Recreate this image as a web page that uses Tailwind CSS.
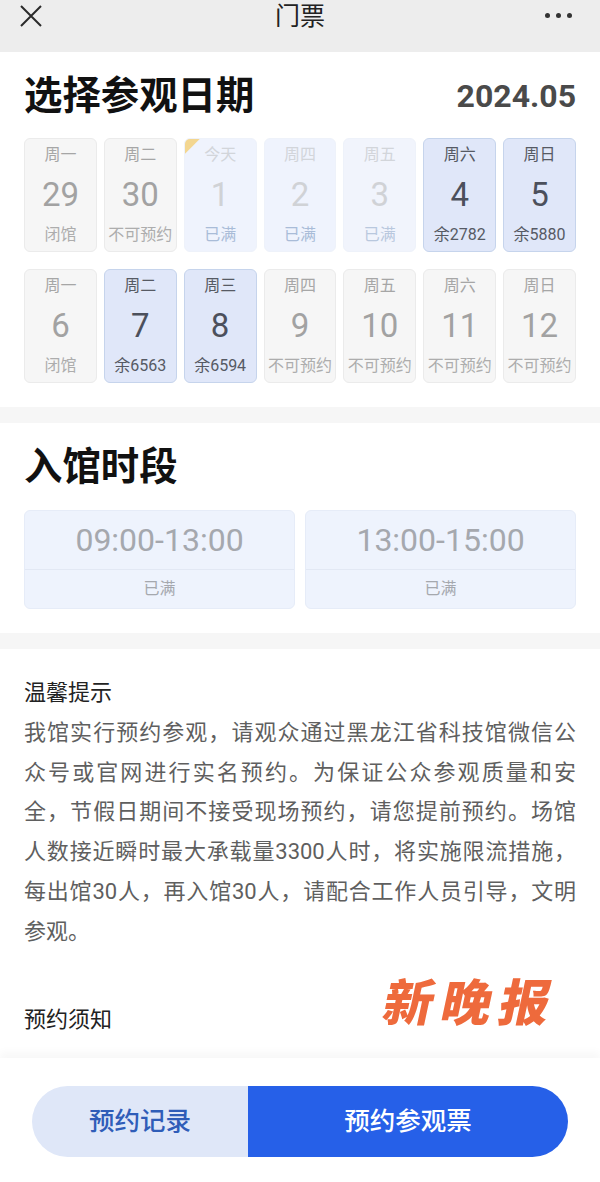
<!DOCTYPE html>
<html lang="zh-CN">
<head>
<meta charset="utf-8">
<title>门票</title>
<script src="https://cdn.jsdelivr.net/npm/@tailwindcss/browser@4"></script>
</head>
<body class="relative w-[600px] h-[1182px] overflow-hidden bg-white font-['Roboto','Noto_Sans_CJK_SC',sans-serif]">

<!-- top bar -->
<header class="h-[52px] bg-[#ededed] flex items-start justify-between pl-[20px] pr-[28px]">
  <div class="w-[60px]">
    <svg class="w-[22px] h-[22px] mt-[5px]" viewBox="0 0 22 22" fill="none" stroke="#2a2a2a" stroke-width="2"><path d="M1 1l20 20M21 1L1 21"/></svg>
  </div>
  <div class="text-[25px] leading-[34px] text-[#222] pl-[8px]">门票</div>
  <div class="w-[60px] flex justify-end gap-[6px] mt-[13px]">
    <span class="w-[5px] h-[5px] rounded-full bg-[#333]"></span>
    <span class="w-[5px] h-[5px] rounded-full bg-[#333]"></span>
    <span class="w-[5px] h-[5px] rounded-full bg-[#333]"></span>
  </div>
</header>

<!-- date picker -->
<section class="px-[24px] pt-[20px] pb-[24px] border-b-[16px] border-[#f6f6f6]">
  <div class="flex items-center justify-between h-[46px] mb-[20px]">
    <h1 class="text-[38.4px] leading-[46px] pt-[2px] font-bold text-[#111]">选择参观日期</h1>
    <div class="text-[32px] font-bold text-[#4a4a4a] pt-[2px]">2024.05</div>
  </div>
  <div class="grid grid-cols-7 gap-x-[7px] gap-y-[17px]">
    <div class="h-[114px] rounded-[6px] border border-[#ebebeb] bg-[#f6f6f6] flex flex-col items-center pt-[5px]"><span class="text-[16px] leading-[22px] text-[#a6a6a6]">周一</span><span class="text-[33px] leading-[50px] text-[#a2a2a2] mt-[4px]">29</span><span class="text-[16px] leading-[22px] text-[#adadad] mt-[4px] whitespace-nowrap">闭馆</span></div>
    <div class="h-[114px] rounded-[6px] border border-[#ebebeb] bg-[#f6f6f6] flex flex-col items-center pt-[5px]"><span class="text-[16px] leading-[22px] text-[#a6a6a6]">周二</span><span class="text-[33px] leading-[50px] text-[#a2a2a2] mt-[4px]">30</span><span class="text-[16px] leading-[22px] text-[#adadad] mt-[4px] whitespace-nowrap">不可预约</span></div>
    <div class="relative overflow-hidden h-[114px] rounded-[6px] border border-[#eef2fa] bg-[#eff3fd] flex flex-col items-center pt-[5px]"><span class="absolute -top-px -left-px w-[17px] h-[17px] bg-[#f3d690] [clip-path:polygon(0_0,100%_0,0_100%)]"></span><span class="text-[16px] leading-[22px] text-[#d2d5da]">今天</span><span class="text-[33px] leading-[50px] text-[#d0d2d6] mt-[4px]">1</span><span class="text-[16px] leading-[22px] text-[#a9bcd8] mt-[4px] whitespace-nowrap">已满</span></div>
    <div class="h-[114px] rounded-[6px] border border-[#eef2fa] bg-[#eff3fd] flex flex-col items-center pt-[5px]"><span class="text-[16px] leading-[22px] text-[#d2d5da]">周四</span><span class="text-[33px] leading-[50px] text-[#d0d2d6] mt-[4px]">2</span><span class="text-[16px] leading-[22px] text-[#a9bcd8] mt-[4px] whitespace-nowrap">已满</span></div>
    <div class="h-[114px] rounded-[6px] border border-[#eef2fa] bg-[#f1f4fc] flex flex-col items-center pt-[5px]"><span class="text-[16px] leading-[22px] text-[#d2d5da]">周五</span><span class="text-[33px] leading-[50px] text-[#d0d2d6] mt-[4px]">3</span><span class="text-[16px] leading-[22px] text-[#b9c8de] mt-[4px] whitespace-nowrap">已满</span></div>
    <div class="h-[114px] rounded-[6px] border border-[#c6d4ec] bg-[#e0e7f9] flex flex-col items-center pt-[5px]"><span class="text-[16px] leading-[22px] text-[#565a64]">周六</span><span class="text-[33px] leading-[50px] text-[#4c505c] mt-[4px]">4</span><span class="text-[16px] leading-[22px] text-[#565a64] mt-[4px] whitespace-nowrap">余2782</span></div>
    <div class="h-[114px] rounded-[6px] border border-[#c6d4ec] bg-[#e0e7f9] flex flex-col items-center pt-[5px]"><span class="text-[16px] leading-[22px] text-[#565a64]">周日</span><span class="text-[33px] leading-[50px] text-[#4c505c] mt-[4px]">5</span><span class="text-[16px] leading-[22px] text-[#565a64] mt-[4px] whitespace-nowrap">余5880</span></div>

    <div class="h-[114px] rounded-[6px] border border-[#ebebeb] bg-[#f6f6f6] flex flex-col items-center pt-[5px]"><span class="text-[16px] leading-[22px] text-[#a6a6a6]">周一</span><span class="text-[33px] leading-[50px] text-[#a2a2a2] mt-[4px]">6</span><span class="text-[16px] leading-[22px] text-[#adadad] mt-[4px] whitespace-nowrap">闭馆</span></div>
    <div class="h-[114px] rounded-[6px] border border-[#c6d4ec] bg-[#e0e7f9] flex flex-col items-center pt-[5px]"><span class="text-[16px] leading-[22px] text-[#565a64]">周二</span><span class="text-[33px] leading-[50px] text-[#4c505c] mt-[4px]">7</span><span class="text-[16px] leading-[22px] text-[#565a64] mt-[4px] whitespace-nowrap">余6563</span></div>
    <div class="h-[114px] rounded-[6px] border border-[#c6d4ec] bg-[#e0e7f9] flex flex-col items-center pt-[5px]"><span class="text-[16px] leading-[22px] text-[#565a64]">周三</span><span class="text-[33px] leading-[50px] text-[#4c505c] mt-[4px]">8</span><span class="text-[16px] leading-[22px] text-[#565a64] mt-[4px] whitespace-nowrap">余6594</span></div>
    <div class="h-[114px] rounded-[6px] border border-[#ebebeb] bg-[#f6f6f6] flex flex-col items-center pt-[5px]"><span class="text-[16px] leading-[22px] text-[#a6a6a6]">周四</span><span class="text-[33px] leading-[50px] text-[#a2a2a2] mt-[4px]">9</span><span class="text-[16px] leading-[22px] text-[#adadad] mt-[4px] whitespace-nowrap">不可预约</span></div>
    <div class="h-[114px] rounded-[6px] border border-[#ebebeb] bg-[#f6f6f6] flex flex-col items-center pt-[5px]"><span class="text-[16px] leading-[22px] text-[#a6a6a6]">周五</span><span class="text-[33px] leading-[50px] text-[#a2a2a2] mt-[4px]">10</span><span class="text-[16px] leading-[22px] text-[#adadad] mt-[4px] whitespace-nowrap">不可预约</span></div>
    <div class="h-[114px] rounded-[6px] border border-[#ebebeb] bg-[#f6f6f6] flex flex-col items-center pt-[5px]"><span class="text-[16px] leading-[22px] text-[#a6a6a6]">周六</span><span class="text-[33px] leading-[50px] text-[#a2a2a2] mt-[4px]">11</span><span class="text-[16px] leading-[22px] text-[#adadad] mt-[4px] whitespace-nowrap">不可预约</span></div>
    <div class="h-[114px] rounded-[6px] border border-[#ebebeb] bg-[#f6f6f6] flex flex-col items-center pt-[5px]"><span class="text-[16px] leading-[22px] text-[#a6a6a6]">周日</span><span class="text-[33px] leading-[50px] text-[#a2a2a2] mt-[4px]">12</span><span class="text-[16px] leading-[22px] text-[#adadad] mt-[4px] whitespace-nowrap">不可预约</span></div>
  </div>
</section>

<!-- time slots -->
<section class="px-[24px] pt-[21px] pb-[24px] border-b-[16px] border-[#f6f6f6]">
  <h2 class="text-[38.4px] leading-[46px] font-bold text-[#111] mb-[20px]">入馆时段</h2>
  <div class="grid grid-cols-2 gap-x-[10px]">
    <div class="h-[99px] rounded-[6px] border border-[#e6ecf8] bg-[#eef3fd] flex flex-col">
      <div class="h-[59px] border-b border-[#e2e8f4] flex items-center justify-center text-[32px] text-[#a5a8ae]">09:00-13:00</div>
      <div class="flex-1 flex items-center justify-center text-[16px] text-[#a5a8ae]">已满</div>
    </div>
    <div class="h-[99px] rounded-[6px] border border-[#e6ecf8] bg-[#eef3fd] flex flex-col">
      <div class="h-[59px] border-b border-[#e2e8f4] flex items-center justify-center text-[32px] text-[#a5a8ae]">13:00-15:00</div>
      <div class="flex-1 flex items-center justify-center text-[16px] text-[#a5a8ae]">已满</div>
    </div>
  </div>
</section>

<!-- notice -->
<section class="px-[24px] pt-[24px] text-[22px] leading-[39.8px] text-[#5f5f5f]">
  <p class="text-[#222]">温馨提示</p>
  <p class="[text-align-last:justify]">我馆实行预约参观，请观众通过黑龙江省科技馆微信公</p>
  <p class="[text-align-last:justify]">众号或官网进行实名预约。为保证公众参观质量和安</p>
  <p class="[text-align-last:justify]">全，节假日期间不接受现场预约，请您提前预约。场馆</p>
  <p class="[text-align-last:justify]">人数接近瞬时最大承载量3300人时，将实施限流措施，</p>
  <p class="[text-align-last:justify]">每出馆30人，再入馆30人，请配合工作人员引导，文明</p>
  <p>参观。</p>
  <p class="text-[#222] mt-[48px]">预约须知</p>
</section>

<!-- watermark -->
<div class="absolute left-[384px] top-[972px] flex gap-[8px] -skew-x-12 font-black text-[50px] leading-[64px] text-[#ee6a3c]">
  <span>新</span><span>晚</span><span>报</span>
</div>

<!-- bottom bar -->
<footer class="absolute left-0 right-0 bottom-0 h-[124px] bg-white pt-[28px] px-[32px] shadow-[0_-6px_8px_rgba(0,0,0,0.03)]">
  <div class="flex h-[71px] rounded-full overflow-hidden text-[25.5px] font-medium">
    <div class="w-[216px] bg-[#dfe7f8] text-[#2f5db8] flex items-center justify-center">预约记录</div>
    <div class="flex-1 bg-[#2660e8] text-white flex items-center justify-center">预约参观票</div>
  </div>
</footer>

</body>
</html>
